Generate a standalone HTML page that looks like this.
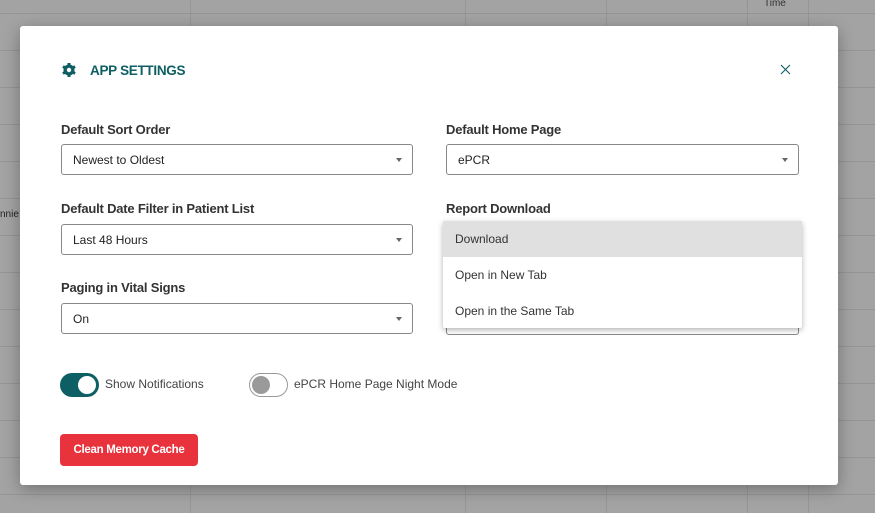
<!DOCTYPE html>
<html><head><style>
body{margin:0;width:875px;height:513px;overflow:hidden;background:#a3a3a3;font-family:"Liberation Sans",sans-serif;position:relative}
.vl{position:absolute;top:0;bottom:0;width:1px;background:#959595}
.hl{position:absolute;left:0;right:0;height:1px;background:#959595}
.modal{position:absolute;left:20px;top:26px;width:818px;height:459px;background:#fff;border-radius:3px;box-shadow:0 4px 16px rgba(0,0,0,.3)}
.title{position:absolute;left:70px;top:63px;color:#0d5f63;font-weight:bold;font-size:13.5px;letter-spacing:-0.3px}
.lbl{position:absolute;font-size:13px;font-weight:bold;color:#333;letter-spacing:-0.2px}
.sel{position:absolute;width:351px;height:31px;border:1px solid #888;border-radius:3px;box-sizing:border-box;font-size:12px;color:#222;padding:8px 11px}
.sel:after{content:"";position:absolute;right:10px;top:13px;border:3.5px solid transparent;border-top:4px solid #666}
.dd{position:absolute;left:443px;top:221px;width:359px;height:107px;background:#fff;box-shadow:0 2px 6px rgba(0,0,0,.3);border-radius:2px;font-size:12px;color:#333}
.dd div{height:36px;line-height:36px;padding-left:12px}
</style></head><body>
<div class="vl" style="left:190px"></div><div class="vl" style="left:465px"></div><div class="vl" style="left:606px"></div><div class="vl" style="left:747px"></div><div class="vl" style="left:808px"></div>
<div class="hl" style="top:13px"></div><div class="hl" style="top:50px"></div><div class="hl" style="top:87px"></div><div class="hl" style="top:124px"></div><div class="hl" style="top:161px"></div><div class="hl" style="top:198px"></div><div class="hl" style="top:235px"></div><div class="hl" style="top:272px"></div><div class="hl" style="top:309px"></div><div class="hl" style="top:346px"></div><div class="hl" style="top:383px"></div><div class="hl" style="top:420px"></div><div class="hl" style="top:457px"></div><div class="hl" style="top:494px"></div>
<div style="position:absolute;left:764px;top:-2px;font-size:10px;color:#333">Time</div>
<div style="position:absolute;left:0;top:209px;font-size:10px;color:#222">nnie</div>
<div class="modal"></div>
<svg style="position:absolute;left:61px;top:62px" width="16" height="16" viewBox="0 0 16 16"><g fill="#0d5f63"><circle cx="8" cy="8" r="5.5"/><rect x="6.5" y="1" width="3" height="14"/><rect x="6.5" y="1" width="3" height="14" transform="rotate(60 8 8)"/><rect x="6.5" y="1" width="3" height="14" transform="rotate(120 8 8)"/></g><circle cx="8" cy="8" r="2.2" fill="#fff"/></svg>
<div class="title" style="left:90px">APP SETTINGS</div>
<svg style="position:absolute;left:780px;top:64px" width="11" height="11"><path d="M1 1L10 10M10 1L1 10" stroke="#0d5f63" stroke-width="1.1"/></svg>
<div class="lbl" style="left:61px;top:122px">Default Sort Order</div>
<div class="sel" style="left:61px;top:144px;width:352px">Newest to Oldest</div>
<div class="lbl" style="left:446px;top:122px">Default Home Page</div>
<div class="sel" style="left:446px;top:144px;width:353px">ePCR</div>
<div class="lbl" style="left:61px;top:201px">Default Date Filter in Patient List</div>
<div class="sel" style="left:61px;top:224px;width:352px">Last 48 Hours</div>
<div class="lbl" style="left:446px;top:201px">Report Download</div>
<div class="sel" style="left:446px;top:304px;width:353px"></div>
<div class="lbl" style="left:61px;top:280px">Paging in Vital Signs</div>
<div class="sel" style="left:61px;top:303px;width:352px">On</div>
<div class="dd"><div style="background:#e0e0e0">Download</div><div>Open in New Tab</div><div>Open in the Same Tab</div></div>
<div style="position:absolute;left:60px;top:373px;width:39px;height:24px;border-radius:12px;background:#0d5f63"></div>
<div style="position:absolute;left:78px;top:376px;width:18px;height:18px;border-radius:50%;background:#fff"></div>
<div style="position:absolute;left:105px;top:377px;font-size:12px;color:#444">Show Notifications</div>
<div style="position:absolute;left:249px;top:373px;width:37px;height:22px;border-radius:12px;border:1px solid #999;background:#fff"></div>
<div style="position:absolute;left:252px;top:376px;width:18px;height:18px;border-radius:50%;background:#9a9a9a"></div>
<div style="position:absolute;left:294px;top:377px;font-size:12px;color:#444">ePCR Home Page Night Mode</div>
<div style="position:absolute;left:60px;top:434px;width:138px;height:32px;border-radius:4px;background:#e8323c;color:#fff;font-size:11.5px;font-weight:bold;line-height:32px;text-align:center;letter-spacing:-0.3px">Clean Memory Cache</div>
</body></html>
